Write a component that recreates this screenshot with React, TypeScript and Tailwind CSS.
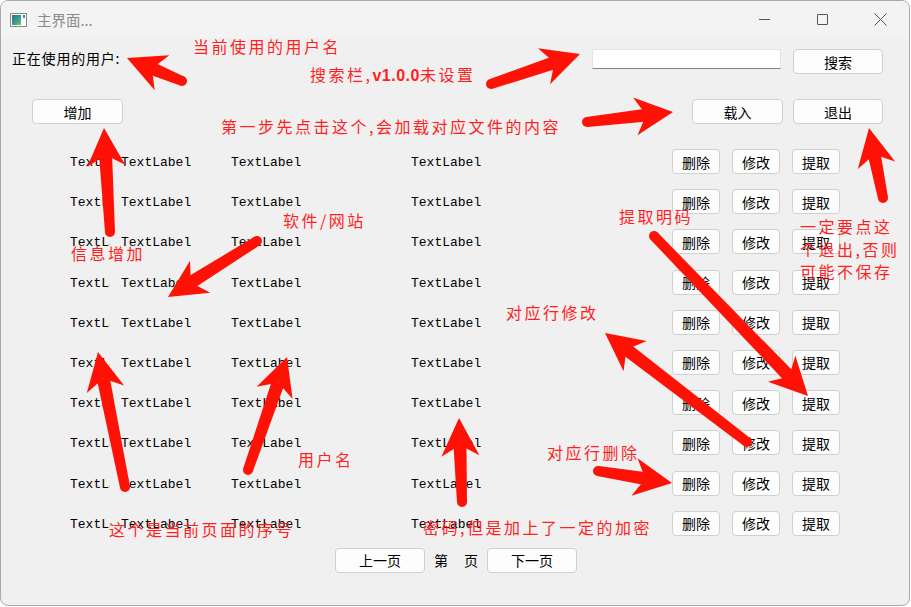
import React from "react";

type Pt = [number, number, number, number];

const ARROWS: Pt[] = [
  [182, 81, 127, 58],
  [491, 84, 580, 54],
  [587, 122, 673, 112],
  [883, 198, 869, 128],
  [110, 232, 104, 128],
  [257, 241, 168, 297],
  [654, 236, 808, 396],
  [747, 442, 605, 333],
  [125, 487, 98, 352],
  [248, 470, 287, 357],
  [462, 502, 459, 418],
  [598, 471, 672, 483],
];

function Arrow({ a }: { a: Pt }) {
  const [x1, y1, x2, y2] = a;
  const dx = x2 - x1;
  const dy = y2 - y1;
  const len = Math.hypot(dx, dy);
  const ux = dx / len;
  const uy = dy / len;
  const nx = -uy;
  const ny = ux;
  const L = 38;
  const W = 19;
  const N = 27;
  const bx = x2 - ux * L;
  const by = y2 - uy * L;
  const kx = x2 - ux * N;
  const ky = y2 - uy * N;
  const t0 = 5;
  const t1 = 6.5;
  const head = `${x2},${y2} ${bx + nx * W},${by + ny * W} ${kx},${ky} ${bx - nx * W},${by - ny * W}`;
  const shaft = `${x1 + nx * t0},${y1 + ny * t0} ${kx + nx * t1},${ky + ny * t1} ${kx - nx * t1},${ky - ny * t1} ${x1 - nx * t0},${y1 - ny * t0}`;
  return (
    <g fill="#ff1206">
      <circle cx={x1} cy={y1} r={t0} />
      <polygon points={shaft} />
      <polygon points={head} />
    </g>
  );
}

const btn =
  "flex items-center justify-center h-[25px] bg-[#fdfdfd] border border-[#d0d0d0] rounded-[4px] text-[14px] leading-[20px] text-black shrink-0";

const cell = "font-['Liberation_Mono',monospace] text-[13px] leading-[20px] text-black mt-[11px]";

function Row() {
  return (
    <div className="flex items-start h-[40.2px] pl-[69px] pr-[69px]">
      <div className={cell + " w-[40px] overflow-hidden whitespace-nowrap"}>TextLabel</div>
      <div className={cell + " ml-[11px] w-[110px]"}>TextLabel</div>
      <div className={cell + " w-[180px]"}>TextLabel</div>
      <div className={cell}>TextLabel</div>
      <div className="ml-auto flex gap-[12px] mt-[7px]">
        <div className={btn + " w-[48px]"}>删除</div>
        <div className={btn + " w-[48px]"}>修改</div>
        <div className={btn + " w-[48px]"}>提取</div>
      </div>
    </div>
  );
}

const note =
  "absolute text-[16px] leading-[20px] tracking-[2.5px] text-[#ff1f1f] whitespace-nowrap font-['Noto_Sans_CJK_SC',sans-serif]";

export default function App() {
  return (
    <div className="relative w-[911px] h-[607px] bg-white overflow-hidden font-['Noto_Sans_CJK_SC',sans-serif]">
      <div className="w-[910px] h-[606px] border border-[#a9a9a9] rounded-[8px] overflow-hidden flex flex-col bg-[#f0f0f0]">
        {/* title bar */}
        <div className="h-[37px] bg-[#f3f3f3] flex items-center shrink-0">
          <svg width="17" height="14" viewBox="0 0 17 14" className="ml-[9px] mt-[1px]">
            <rect x="0.5" y="0.5" width="16" height="13" fill="#fafafa" stroke="#8a8a8a" />
            <defs>
              <linearGradient id="ig" x1="0" y1="0" x2="1" y2="1">
                <stop offset="0" stopColor="#2a6f9e" />
                <stop offset="0.6" stopColor="#3fa08a" />
                <stop offset="1" stopColor="#7fc07a" />
              </linearGradient>
            </defs>
            <rect x="2" y="2" width="9" height="10" fill="url(#ig)" />
            <rect x="13" y="2" width="2" height="3" fill="#3a8fb0" />
          </svg>
          <div className="ml-[10px] text-[14.5px] leading-[20px] text-[#8a8a8a]">主界面...</div>
          <div className="ml-auto flex h-full">
            <div className="w-[58px] h-full flex items-center justify-center">
              <div className="w-[11px] h-[1px] bg-[#555]" />
            </div>
            <div className="w-[58px] h-full flex items-center justify-center">
              <div className="w-[11px] h-[11px] border border-[#555] rounded-[1px]" />
            </div>
            <div className="w-[58px] h-full flex items-center justify-center">
              <svg width="13" height="13" viewBox="0 0 13 13">
                <path d="M0.5 0.5 L12.5 12.5 M12.5 0.5 L0.5 12.5" stroke="#555" strokeWidth="1" />
              </svg>
            </div>
          </div>
        </div>

        {/* content */}
        <div className="flex flex-col">
          <div className="flex items-start mt-[11px] pl-[11px] pr-[26px]">
            <div className="text-[14px] leading-[20px] text-black -mt-[1px] tracking-[0.8px]">正在使用的用户:</div>
            <div className="ml-auto w-[189px] h-[20px] bg-white border border-[#e3e3e3] border-b-[#868686] rounded-t-[2px]" />
            <div className={btn + " w-[90px] ml-[12px]"}>搜索</div>
          </div>

          <div className="flex items-start mt-[25px] pl-[31px] pr-[26px]">
            <div className={btn + " w-[91px]"}>增加</div>
            <div className={btn + " w-[91px] ml-auto"}>载入</div>
            <div className={btn + " w-[90px] ml-[10px]"}>退出</div>
          </div>

          <div className="flex flex-col mt-[18px]">
            {Array.from({ length: 10 }).map((_, i) => (
              <Row key={i} />
            ))}
          </div>

          <div className="flex items-center justify-center mt-[4px] pl-[2px] text-[14px] leading-[20px] text-black">
            <div className={btn + " w-[90px]"}>上一页</div>
            <div className="ml-[9px]">第</div>
            <div className="ml-[16px]">页</div>
            <div className={btn + " w-[90px] ml-[9px]"}>下一页</div>
          </div>
        </div>
      </div>

      {/* annotations overlay */}
      <svg className="absolute left-0 top-0 pointer-events-none" width="911" height="607">
        {ARROWS.map((a, i) => (
          <Arrow key={i} a={a} />
        ))}
      </svg>

      <div className={note + " left-[193px] top-[36px]"}>当前使用的用户名</div>
      <div className={note + " left-[310px] top-[64px]"}>
        搜索栏,<span className="font-['Liberation_Sans',sans-serif] font-bold tracking-[0.5px]">v1.0.0</span>未设置
      </div>
      <div className={note + " left-[221px] top-[116px]"}>第一步先点击这个,会加载对应文件的内容</div>
      <div className={note + " left-[71px] top-[243px]"}>信息增加</div>
      <div className={note + " left-[283px] top-[210px]"}>软件/网站</div>
      <div className={note + " left-[619px] top-[206px]"}>提取明码</div>
      <div className={note + " left-[800px] top-[215px] leading-[22.5px]"}>
        一定要点这
        <br />
        个退出,否则
        <br />
        可能不保存
      </div>
      <div className={note + " left-[506px] top-[302px]"}>对应行修改</div>
      <div className={note + " left-[547px] top-[442px]"}>对应行删除</div>
      <div className={note + " left-[298px] top-[449px]"}>用户名</div>
      <div className={note + " left-[109px] top-[519px]"}>这个是当前页面的序号</div>
      <div className={note + " left-[423px] top-[517px]"}>密码,但是加上了一定的加密</div>
    </div>
  );
}
